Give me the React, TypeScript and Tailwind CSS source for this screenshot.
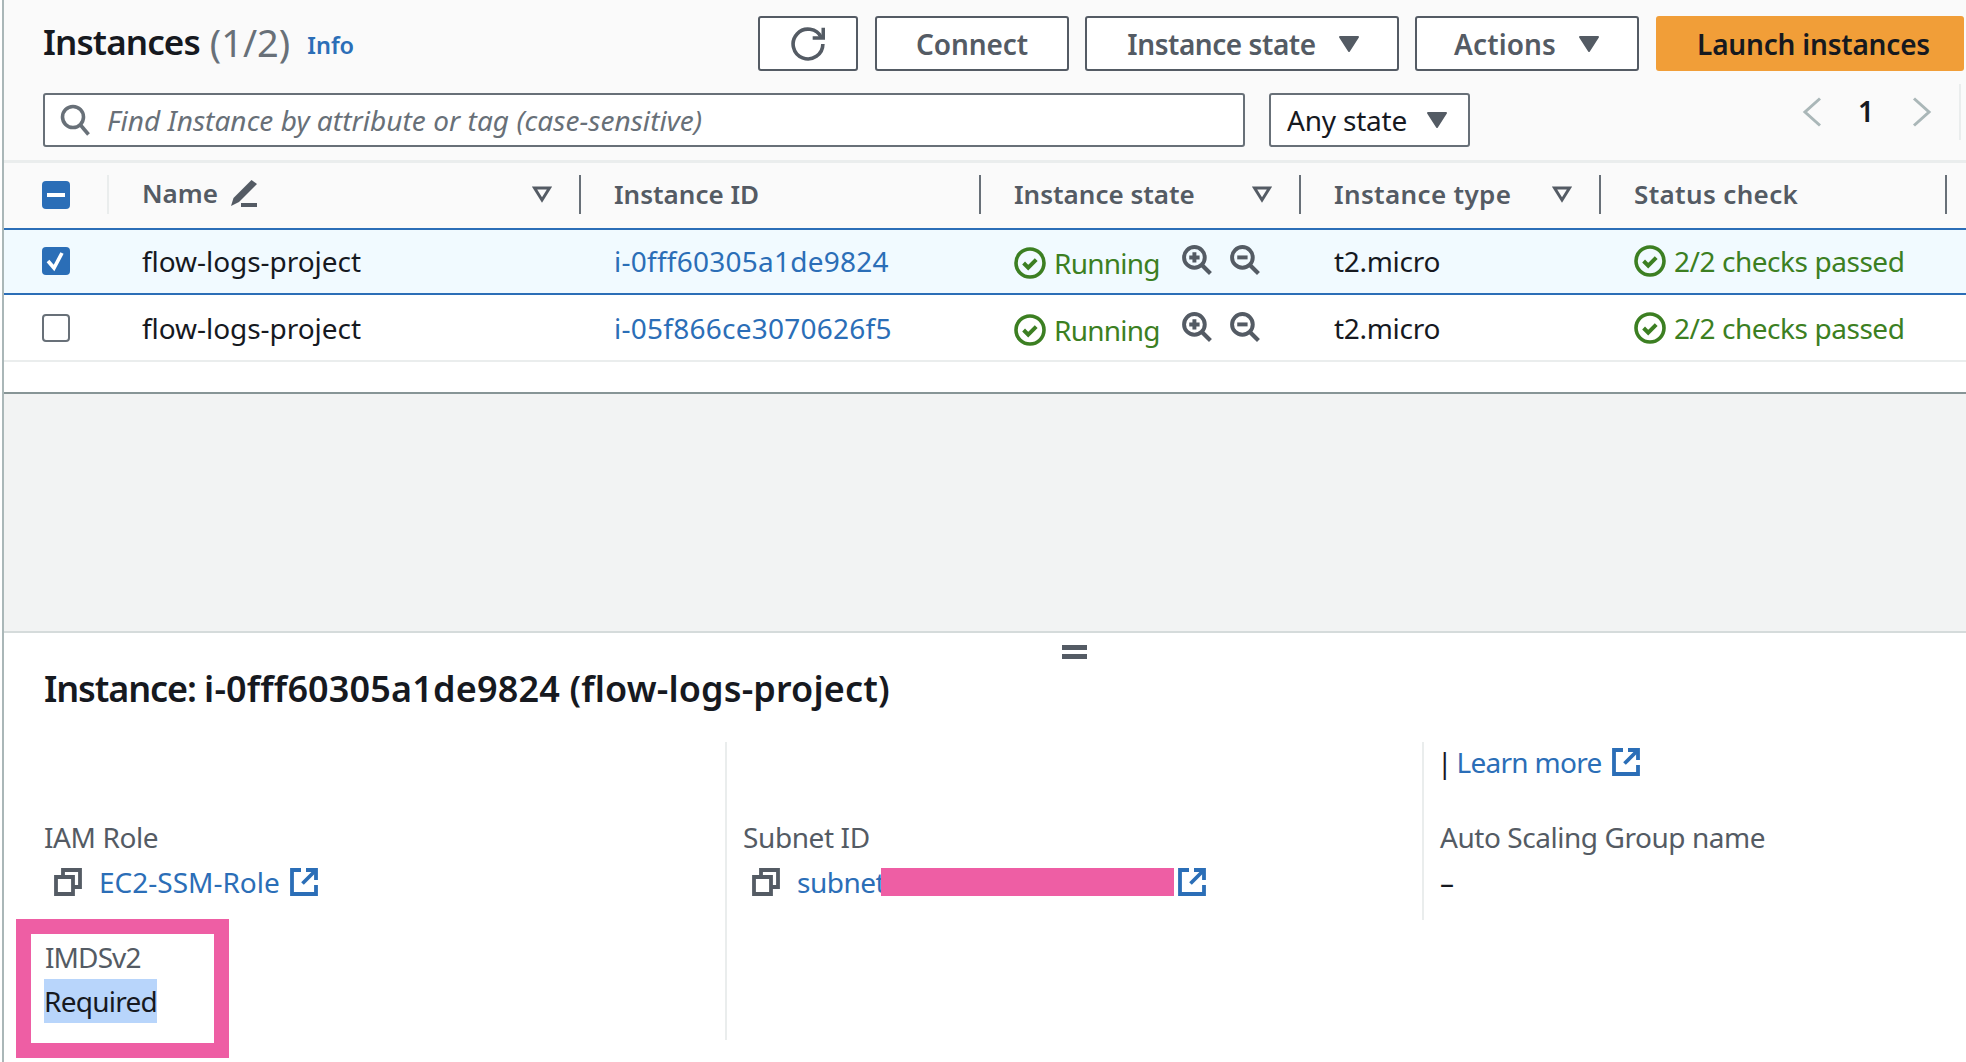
import React from "react";

const Caret = () => (
  <svg viewBox="0 0 22 18" className="w-[22px] h-[18px] shrink-0" fill="#545b64" stroke="#545b64" strokeWidth="2" strokeLinejoin="round">
    <path d="M2 2h18L11 16z" />
  </svg>
);

const Filter = () => (
  <svg viewBox="0 0 20 17" className="w-[20px] h-[17px] shrink-0" fill="none" stroke="#545b64" strokeWidth="3">
    <path d="M2.5 2h15L10 14z" />
  </svg>
);

const Check = ({ cls }: { cls: string }) => (
  <svg viewBox="0 0 16 16" className={cls} fill="none" stroke="#3c7f22" strokeWidth="1.8">
    <circle cx="8" cy="8" r="7" />
    <path d="M4.8 8l2.3 2.3 4-4" strokeWidth="2" />
  </svg>
);

const Zoom = ({ plus }: { plus?: boolean }) => (
  <svg viewBox="0 0 29 29" className="w-[30px] h-[30px] shrink-0" fill="none" stroke="#545b64" strokeWidth="3.8">
    <circle cx="12" cy="12" r="10" />
    <path d="M19.5 19.5l8 8" strokeWidth="4" />
    <path d={plus ? "M7 12h10M12 7v10" : "M7 12h10"} />
  </svg>
);

const External = () => (
  <svg viewBox="0 0 28 28" className="w-[28px] h-[28px] shrink-0" fill="none" stroke="#2b6eb7" strokeWidth="3.8">
    <path d="M11 2H2v24h24v-9" />
    <path d="M16 2h10v10" />
    <path d="M25.5 2.5L12.5 15.5" />
  </svg>
);

const Copy = () => (
  <svg viewBox="0 0 28 28" className="w-[28px] h-[28px] shrink-0" fill="none" stroke="#545b64" strokeWidth="3.8">
    <path d="M2 9h17v17H2z" />
    <path d="M9 9V2h17v17h-7" />
  </svg>
);

const Btn = ({ w, children }: { w: string; children: React.ReactNode }) => (
  <div className={`${w} h-[55px] shrink-0 flex items-center justify-center gap-[22px] border-2 border-[#545b64] rounded-[3px] bg-white text-[#545b64] font-semibold text-[28px] tracking-[-0.1px]`}>
    {children}
  </div>
);

const Row = ({ selected, id }: { selected?: boolean; id: string }) => (
  <div
    className={
      selected
        ? "grid grid-cols-[105px_472px_400px_320px_300px_1fr] h-[67px] items-center border-y-2 border-[#2b6eb7] bg-[#f1faff] pb-[2px]"
        : "grid grid-cols-[105px_472px_400px_320px_300px_1fr] h-[67px] items-center border-b-2 border-[#eaeded] bg-white"
    }
  >
    <div className="pl-[38px]">
      {selected ? (
        <div className="w-[28px] h-[28px] rounded-[4px] bg-[#2b6eb7] flex items-center justify-center">
          <svg viewBox="0 0 28 28" className="w-[28px] h-[28px]" fill="none" stroke="#fff" strokeWidth="3.6">
            <path d="M6 14l6 7 8-15" />
          </svg>
        </div>
      ) : (
        <div className="w-[28px] h-[28px] rounded-[4px] border-2 border-[#687078] bg-white" />
      )}
    </div>
    <div className="pl-[33px] tracking-[-0.05px]">flow-logs-project</div>
    <div className="pl-[33px] text-[#2b6eb7] tracking-[0.25px]">{id}</div>
    <div className="pl-[33px] flex items-center">
      <Check cls="w-[32px] h-[32px] shrink-0 mt-[4px]" />
      <span className="ml-[8px] text-[#3c7f22] mt-[4px] tracking-[-0.75px]">Running</span>
      <span className="ml-[22px] flex gap-[18px] -mt-[1px]">
        <Zoom plus />
        <Zoom />
      </span>
    </div>
    <div className="pl-[33px] tracking-[-0.3px]">t2.micro</div>
    <div className="pl-[33px] flex items-center">
      <Check cls="w-[32px] h-[32px] shrink-0" />
      <span className="ml-[8px] text-[#3c7f22] tracking-[-0.45px]">2/2 checks passed</span>
    </div>
  </div>
);

const Head = ({ children, filter, pen, track }: { children: React.ReactNode; filter?: boolean; pen?: boolean; track?: boolean }) => (
  <div className="h-[39px] flex items-center pl-[33px] pr-[27px] border-r-2 border-[#687078]">
    <span className={`font-semibold text-[#545b64] text-[26px] flex items-center ${pen ? "-mt-[3px]" : "-mt-[1px]"} ${track ? "tracking-[0.35px]" : ""}`}>{children}</span>
    {filter && (
      <span className="ml-auto">
        <Filter />
      </span>
    )}
  </div>
);

export default function App() {
  return (
    <div className="w-[1966px] h-[1062px] overflow-hidden pl-[2px] bg-white text-[#16191f] text-[28px] leading-[36px] font-['Noto_Sans',sans-serif]">
      <div className="h-full border-l-2 border-[#aab7b8] flex flex-col">
        <div className="h-[160px] bg-[#fafafa] pt-[16px] pl-[39px] pr-[2px] shrink-0">
          <div className="flex items-center h-[55px]">
            <div className="text-[35px] font-semibold -mt-[4px] tracking-[-0.9px]">Instances</div>
            <div className="ml-[10px] text-[38px] text-[#687078] -mt-[4px]">(1/2)</div>
            <div className="ml-[17px] text-[#2b6eb7] text-[23.5px] font-semibold mt-[2px]">Info</div>
            <div className="ml-auto flex gap-[16px]">
              <span className="mr-[1px]">
                <Btn w="w-[100px]">
                  <svg viewBox="0 0 16 16" className="w-[34px] h-[34px]" fill="none" stroke="#545b64" strokeWidth="1.7">
                    <path d="M10.2 5.2h5V0.4" />
                    <path d="M15 8a7 7 0 1 1-.7-3.05" />
                  </svg>
                </Btn>
              </span>
              <Btn w="w-[194px]">Connect</Btn>
              <Btn w="w-[314px]"><span className="tracking-[-0.45px] ml-[3px]">Instance state</span><Caret /></Btn>
              <Btn w="w-[224px]"><span className="tracking-[0.1px]">Actions</span><Caret /></Btn>
              <div className="ml-[1px] w-[308px] h-[55px] shrink-0 rounded-[3px] bg-[#f19e38] flex items-center justify-center font-semibold tracking-[-0.2px] pl-[7px]">Launch instances</div>
            </div>
          </div>
          <div className="flex mt-[22px]">
            <div className="w-[1202px] h-[54px] border-2 border-[#687078] rounded-[3px] bg-white flex items-center pl-[15px]">
              <svg viewBox="0 0 30 32" className="w-[30px] h-[32px] shrink-0" fill="none" stroke="#687078" strokeWidth="3.6">
                <circle cx="13" cy="13" r="10.5" />
                <path d="M20.5 21l8 9.5" />
              </svg>
              <span className="ml-[17px] italic text-[#687078] tracking-[0.05px]">Find Instance by attribute or tag (case-sensitive)</span>
            </div>
            <div className="ml-[24px] w-[201px] h-[54px] border-2 border-[#687078] rounded-[3px] bg-white flex items-center pl-[16px] gap-[19px] tracking-[-0.2px]">
              Any state
              <Caret />
            </div>
            <div className="ml-auto flex items-start pr-[3px] pt-[4px]">
              <svg viewBox="0 0 20 30" className="w-[20px] h-[30px] shrink-0" fill="none" stroke="#aab7b8" strokeWidth="3">
                <path d="M18 1.5L3 15l15 13.5" />
              </svg>
              <span className="ml-[36px] mr-[38px] font-semibold -mt-[4px]">1</span>
              <svg viewBox="0 0 20 30" className="w-[20px] h-[30px] shrink-0" fill="none" stroke="#aab7b8" strokeWidth="3">
                <path d="M2 1.5L17 15 2 28.5" />
              </svg>
              <div className="ml-[27px] w-[2px] h-[56px] -mt-[13px] bg-[#eaeded]" />
            </div>
          </div>
        </div>
        <div className="h-[3px] bg-[#eaeded] shrink-0" />
        <div className="h-[65px] pb-[2px] bg-[#fafafa] grid grid-cols-[105px_472px_400px_320px_300px_346px_1fr] items-center shrink-0">
          <div className="h-[39px] border-r-2 border-[#eaeded] pl-[38px] flex items-center">
            <div className="w-[28px] h-[28px] rounded-[4px] bg-[#2b6eb7] flex items-center justify-center">
              <div className="w-[18px] h-[4px] bg-white" />
            </div>
          </div>
          <Head filter pen>
            Name
            <svg viewBox="0 0 29 28" className="ml-[11px] w-[29px] h-[28px]" fill="#545b64">
              <path d="M22.5 1l5.5 4L10 23l-8 4 2.5-8z" />
              <path d="M12 24h16v4H12z" />
            </svg>
          </Head>
          <Head>Instance ID</Head>
          <Head filter>Instance state</Head>
          <Head filter track>Instance type</Head>
          <Head track>Status check</Head>
          <div />
        </div>
        <Row selected id="i-0fff60305a1de9824" />
        <Row id="i-05f866ce3070626f5" />
        <div className="h-[32px] bg-white shrink-0 border-b-2 border-[#879596]" />
        <div className="h-[239px] bg-[#f2f3f3] border-b-2 border-[#d5dbdb] shrink-0" />
        <div className="relative flex-1 bg-white">
          <div className="absolute left-[1058px] top-[12px] w-[25px] h-[14px] border-y-[5px] border-[#545b64]" />
          <div className="pt-[33px] pl-[40px] text-[36px] leading-[46px] font-semibold">
            <span className="tracking-[-1.1px]">Instance: </span>
            <span className="tracking-[0.15px]">i-0fff60305a1de9824 (flow-logs-project)</span>
          </div>
          <div className="grid grid-cols-[721px_697px_1fr] mt-[30px]">
            <div className="pt-[77px]">
              <div className="pl-[40px] text-[#545b64] tracking-[-0.4px]">IAM Role</div>
              <div className="pl-[50px] mt-[13px] h-[28px] flex items-center text-[#2b6eb7]">
                <Copy />
                <span className="ml-[17px] mr-[10px]">EC2-SSM-Role</span>
                <External />
              </div>
              <div className="mt-[23px] ml-[12px] w-[213px] h-[139px] border-[15px] border-[#ee5ea4] pl-[14px] pt-[5px]">
                <div className="text-[#545b64] tracking-[-0.9px]">IMDSv2</div>
                <div className="mt-[4px] w-[113px] h-[44px] bg-[#b8d5fb] flex items-center -ml-[1px] tracking-[-0.75px]">Required</div>
              </div>
            </div>
            <div className="border-l-2 border-[#eaeded] h-[298px] pt-[77px] pl-[16px]">
              <div className="text-[#545b64] tracking-[-0.4px]">Subnet ID</div>
              <div className="pl-[9px] mt-[13px] h-[28px] flex items-center text-[#2b6eb7]">
                <Copy />
                <span className="ml-[17px] w-[84px] tracking-[-0.5px] -mt-[1px]">subnet</span>
                <div className="w-[293px] h-[28px] bg-[#ee5ea4]" />
                <span className="ml-[4px]"><External /></span>
              </div>
            </div>
            <div className="border-l-2 border-[#eaeded] h-[178px] pl-[16px] pt-[2px]">
              <div className="flex items-center h-[36px] text-[#2b6eb7]">
                <span className="text-[#16191f] mr-[4px] -ml-[3px]">|</span>
                <span className="tracking-[-0.7px]">Learn more</span>
                <span className="ml-[10px]"><External /></span>
              </div>
              <div className="mt-[39px] text-[#545b64] tracking-[-0.45px]">Auto Scaling Group name</div>
              <div className="mt-[9px]">–</div>
            </div>
          </div>
        </div>
      </div>
    </div>
  );
}
